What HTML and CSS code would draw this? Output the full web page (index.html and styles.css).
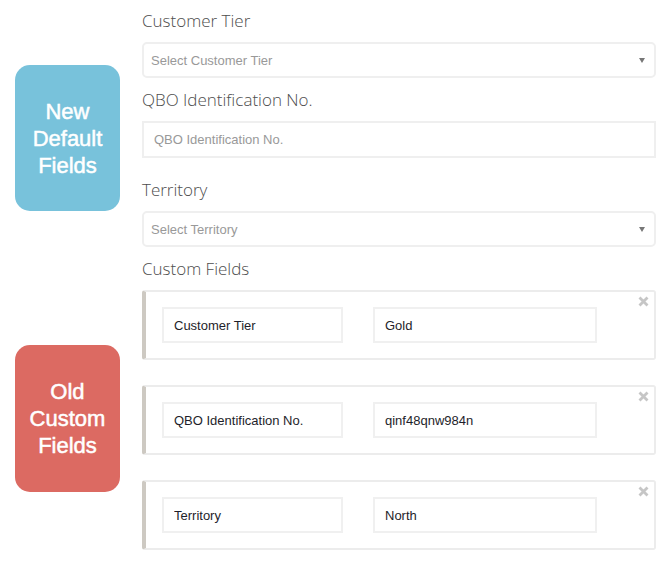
FILE: index.html
```html
<!DOCTYPE html>
<html lang="en">
<head>
    <meta charset="UTF-8">
    <title>Customer Fields</title>
    <link rel="stylesheet" href="styles.css">
</head>
<body>
    <div class="page">
        <div class="badges">
            <div class="badge badge-new">New<br>Default<br>Fields</div>
            <div class="badge badge-old">Old<br>Custom<br>Fields</div>
        </div>

        <div class="form">
            <label class="field-label">Customer Tier</label>
            <div class="select">
                <span>Select Customer Tier</span>
                <i class="caret"></i>
            </div>

            <label class="field-label">QBO Identification No.</label>
            <input class="text-input" type="text" placeholder="QBO Identification No.">

            <label class="field-label territory">Territory</label>
            <div class="select">
                <span>Select Territory</span>
                <i class="caret"></i>
            </div>

            <label class="field-label">Custom Fields</label>
            <div class="custom-list">
                <div class="custom-row">
                    <input class="cf-name" type="text" value="Customer Tier">
                    <input class="cf-value" type="text" value="Gold">
                    <span class="remove"><svg width="11" height="11" viewBox="0 0 11 11"><path d="M1.5 1.5 L9.5 9.5 M9.5 1.5 L1.5 9.5" stroke="#c6c6c6" stroke-width="2.8"/></svg></span>
                </div>
                <div class="custom-row">
                    <input class="cf-name" type="text" value="QBO Identification No.">
                    <input class="cf-value" type="text" value="qinf48qnw984n">
                    <span class="remove"><svg width="11" height="11" viewBox="0 0 11 11"><path d="M1.5 1.5 L9.5 9.5 M9.5 1.5 L1.5 9.5" stroke="#c6c6c6" stroke-width="2.8"/></svg></span>
                </div>
                <div class="custom-row">
                    <input class="cf-name" type="text" value="Territory">
                    <input class="cf-value" type="text" value="North">
                    <span class="remove"><svg width="11" height="11" viewBox="0 0 11 11"><path d="M1.5 1.5 L9.5 9.5 M9.5 1.5 L1.5 9.5" stroke="#c6c6c6" stroke-width="2.8"/></svg></span>
                </div>
            </div>
        </div>
    </div>
</body>
</html>
```

FILE: styles.css
```css
body {
    margin: 0;
    background: #fff;
    font-family: "Liberation Sans", Arial, sans-serif;
}
.page {
    display: flex;
    padding: 0 15px;
}
.badges {
    width: 105px;
    padding-top: 65px;
    margin-right: 22px;
}
.badge {
    display: flex;
    align-items: center;
    justify-content: center;
    text-align: center;
    color: white;
    font-size: 22px;
    line-height: 27px;
    -webkit-text-stroke: 0.5px white;
    border-radius: 15px;
}
.badge-new {
    height: 146px;
    background: #78c2db;
}
.badge-old {
    height: 147px;
    margin-top: 134px;
    background: #dc6a62;
}
.form {
    width: 514px;
    display: flex;
    flex-direction: column;
    padding-top: 9px;
}
.field-label {
    font-family: "Open Sans", sans-serif;
    font-size: 17px;
    font-weight: 350;
    line-height: 24px;
    color: #4d4d4d;
    margin-bottom: 9px;
}
.field-label.territory {
    margin-top: 20px;
}
.select {
    box-sizing: border-box;
    height: 36px;
    border: 2px solid #efefef;
    border-radius: 5px;
    display: flex;
    align-items: center;
    justify-content: space-between;
    padding: 0 9px 0 7px;
    font-size: 13px;
    color: #999;
    margin-bottom: 10px;
}
.caret {
    width: 0;
    height: 0;
    border-left: 3.5px solid transparent;
    border-right: 3.5px solid transparent;
    border-top: 5px solid #777;
}
.text-input {
    box-sizing: border-box;
    height: 37px;
    border: 2px solid #efefef;
    border-radius: 0;
    padding: 0 10px;
    font-family: "Liberation Sans", Arial, sans-serif;
    font-size: 13px;
    outline: none;
}
.text-input::placeholder {
    color: #999;
}
.custom-list {
    display: flex;
    flex-direction: column;
    gap: 25px;
}
.custom-row {
    position: relative;
    box-sizing: border-box;
    height: 70px;
    border: 2px solid #ececec;
    border-left: 4px solid #cdc9c2;
    border-radius: 3px;
    display: flex;
    align-items: center;
    padding-left: 16px;
    gap: 30px;
}
.custom-row input {
    box-sizing: border-box;
    height: 36px;
    border: 2px solid #f0f0f0;
    padding: 0 10px;
    font-family: "Liberation Sans", Arial, sans-serif;
    font-size: 13px;
    color: #1e1e2a;
    outline: none;
}
.cf-name {
    width: 181px;
}
.cf-value {
    width: 224px;
}
.remove {
    position: absolute;
    top: 4px;
    right: 5px;
    line-height: 0;
}
```
